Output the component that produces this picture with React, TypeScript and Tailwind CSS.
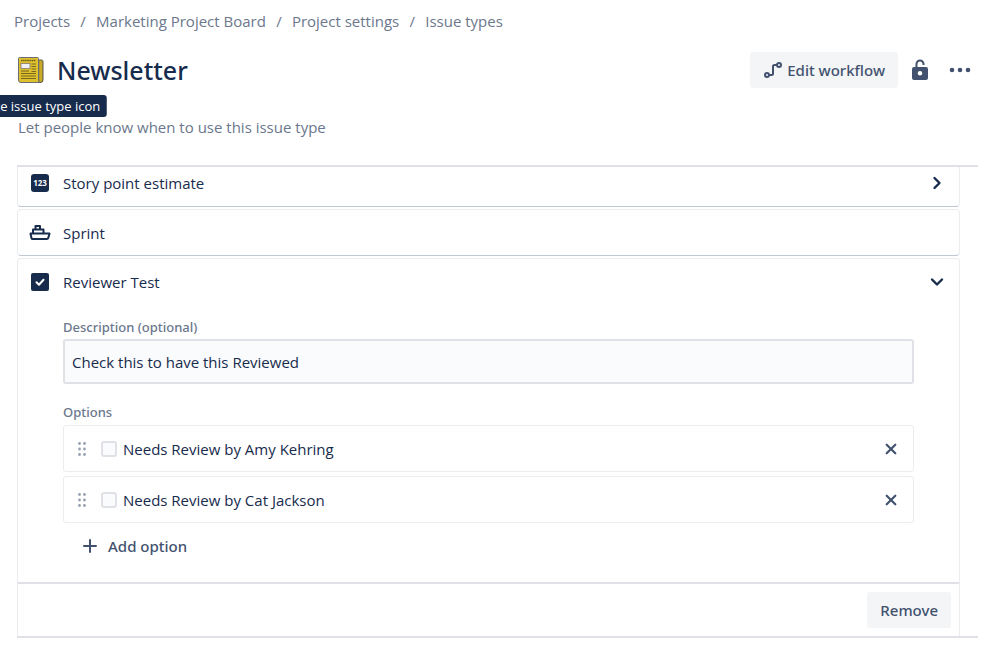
import { ReactNode, useState } from "react";

const crumbs = ["Projects", "Marketing Project Board", "Project settings", "Issue types"];

const NewspaperIcon = () => (
  <svg width="28" height="28" viewBox="0 0 28 28" aria-hidden="true">
    <path d="M20 4h4.500q1.500 0 1.500 1.500V24q0 2.500-2.500 2.500H20z" fill="#b59b25" stroke="#5c5a4a" strokeWidth="1" />
    <path d="M1.500 2.500q0-1 1-1h18q1 0 1 1v21.500q0 2.500 2 2.500H4q-2.500 0-2.500-2.500z" fill="#dfc02d" stroke="#6b6c78" strokeWidth="1" />
    <path d="M4 4.500h15" stroke="#6b5d20" strokeWidth="1.500" strokeDasharray="1.500 .6" />
    <rect x="4" y="7.500" width="9" height="5" fill="#f2f1fa" stroke="#81776a" strokeWidth=".8" />
    <path d="M14.500 8H19M14.500 10.500H19M14.500 13H19M4 15h8M14.500 15.500H19M4 17.500h15M4 20h15M4 22.500h15" stroke="#776720" strokeWidth="1.100" />
    <path d="M24 5v20" stroke="#ddbb2d" strokeWidth="1" />
  </svg>
);

const WorkflowIcon = () => (
  <svg width="20" height="20" viewBox="0 0 20 20" fill="none" stroke="currentColor" strokeWidth="2" aria-hidden="true">
    <circle cx="4" cy="15" r="2" />
    <circle cx="16" cy="5" r="2" />
    <path d="M6 15h2.500q1.500 0 1.500-1.500v-7Q10 5 11.500 5H14" />
  </svg>
);

const UnlockIcon = () => (
  <svg width="18" height="24" viewBox="0 0 18 24" aria-hidden="true">
    <path d="M5.500 10V6a3.500 3.500 0 0 1 7 0v1" fill="none" stroke="currentColor" strokeWidth="2" />
    <path fillRule="evenodd" fill="currentColor" d="M3 9h12a2 2 0 0 1 2 2v9a2 2 0 0 1-2 2H3a2 2 0 0 1-2-2V11a2 2 0 0 1 2-2zm6 4a2.300 2.300 0 1 0 0 4.600 2.300 2.300 0 0 0 0-4.600z" />
  </svg>
);

const MoreIcon = () => (
  <svg width="22" height="6" viewBox="0 0 22 6" fill="currentColor" aria-hidden="true">
    <circle cx="3" cy="3" r="2.300" />
    <circle cx="11" cy="3" r="2.300" />
    <circle cx="19" cy="3" r="2.300" />
  </svg>
);

const NumberIcon = () => (
  <span className="flex h-[18px] w-[18px] items-center justify-center rounded-[3px] bg-[#172b4d] text-[8px] leading-none font-bold text-white">
    123
  </span>
);

const ShipIcon = () => (
  <svg width="22" height="18" viewBox="0 0 22 18" fill="none" stroke="currentColor" strokeWidth="2" strokeLinejoin="round" aria-hidden="true">
    <path d="M1.500 9.500h19l-1.300 4.700Q18.900 15 18 15H3.500Q2.700 15 2.500 14.200z" />
    <path d="M4 9.500V5.500h10.500V9.500" />
    <path d="M6.500 5.500V2h4.500v3.500" />
  </svg>
);

const CheckIcon = () => (
  <svg width="18" height="18" viewBox="0 0 18 18" aria-hidden="true">
    <rect width="18" height="18" rx="2" fill="#172b4d" />
    <path d="M5.500 9.200 8 11.700l4.500-4.900" fill="none" stroke="#fff" strokeWidth="2" strokeLinecap="round" strokeLinejoin="round" />
  </svg>
);

const ChevronIcon = ({ open }: { open: boolean }) => (
  <svg width="14" height="14" viewBox="0 0 14 14" fill="none" stroke="currentColor" strokeWidth="2.400" strokeLinecap="round" strokeLinejoin="round" aria-hidden="true">
    <path d={open ? "M2 4.500 7 9.500l5-5" : "m4.500 2 5 5-5 5"} />
  </svg>
);

const DragIcon = () => (
  <svg width="8" height="14" viewBox="0 0 8 14" fill="#97a0af" aria-hidden="true">
    {[1.5, 7, 12.5].map((y) => (
      <g key={y}>
        <circle cx="1.500" cy={y} r="1.400" />
        <circle cx="6.500" cy={y} r="1.400" />
      </g>
    ))}
  </svg>
);

const CloseIcon = () => (
  <svg width="12" height="12" viewBox="0 0 12 12" fill="none" stroke="currentColor" strokeWidth="2.200" strokeLinecap="round" aria-hidden="true">
    <path d="m1.700 1.700 8.600 8.600M10.300 1.700l-8.600 8.600" />
  </svg>
);

const PlusIcon = () => (
  <svg width="14" height="14" viewBox="0 0 14 14" fill="none" stroke="currentColor" strokeWidth="2" strokeLinecap="round" aria-hidden="true">
    <path d="M7 1v12M1 7h12" />
  </svg>
);

interface FieldLabelProps {
  icon: ReactNode;
  name: string;
}

const FieldLabel: React.FC<FieldLabelProps> = ({ icon, name }) => (
  <span className="flex items-center gap-3">
    <span className="flex w-[22px] justify-center">{icon}</span>
    {name}
  </span>
);

const App = () => {
  const [description, setDescription] = useState("Check this to have this Reviewed");
  const [options, setOptions] = useState(["Needs Review by Amy Kehring", "Needs Review by Cat Jackson"]);
  const [isOpen, setIsOpen] = useState(true);

  return (
    <main className="min-h-screen bg-white font-['Open_Sans','Noto_Sans',sans-serif] text-[15px] leading-5 text-[#172b4d]">
      <nav aria-label="Breadcrumbs" className="px-3.5 pt-[11px]">
        <ol className="flex text-[#6b778c]">
          {crumbs.map((crumb, i) => (
            <li key={crumb} className="flex">
              {i > 0 && <span className="w-[26px] text-center">/</span>}
              <a href="#">{crumb}</a>
            </li>
          ))}
        </ol>
      </nav>

      <header className="mt-[21px] flex h-9 items-center justify-between pr-7 pl-[17px]">
        <div className="flex items-center gap-3">
          <button className="relative" aria-label="Change issue type icon">
            <NewspaperIcon />
            <span className="absolute top-full left-1/2 mt-[11px] -translate-x-1/2 rounded-[3px] bg-[#172b4d] px-1.5 py-px text-[13px] leading-5 whitespace-nowrap text-white">
              Change issue type icon
            </span>
          </button>
          <h1 className="font-['Noto_Sans',sans-serif] text-[25px] leading-8 font-medium">Newsletter</h1>
        </div>
        <div className="flex items-center gap-[13px] text-[#42526e]">
          <button className="flex h-9 items-center gap-1 rounded-[3px] bg-[#f4f5f7] px-[13px] font-['Noto_Sans',sans-serif] font-medium">
            <WorkflowIcon />
            Edit workflow
          </button>
          <button aria-label="Restrictions">
            <UnlockIcon />
          </button>
          <button aria-label="More actions" className="ml-[7px]">
            <MoreIcon />
          </button>
        </div>
      </header>

      <p className="mt-[29px] px-[18px] text-[#6b778c]">Let people know when to use this issue type</p>

      <section className="mt-7 mr-[21px] ml-[17px] border-y-2 border-[#dfe1e6]">
        <div className="mr-[18px] flex flex-col gap-[2px]">
          <button className="flex h-10 items-center justify-between rounded-b-[4px] border border-t-0 border-[#ebecf0] border-b-[#c1c7d0] pr-[15px] pb-2 pl-[11px]">
            <FieldLabel icon={<NumberIcon />} name="Story point estimate" />
            <ChevronIcon open={false} />
          </button>
          <div className="flex h-[47px] items-center rounded-[4px] border border-[#ebecf0] border-b-[#c1c7d0] px-[11px]">
            <FieldLabel icon={<ShipIcon />} name="Sprint" />
          </div>

          <article className="rounded-t-[4px] border border-b-0 border-[#ebecf0]">
            <button
              aria-expanded={isOpen}
              onClick={() => setIsOpen(!isOpen)}
              className="flex h-[46px] w-full items-center justify-between pr-[15px] pl-[11px]"
            >
              <FieldLabel icon={<CheckIcon />} name="Reviewer Test" />
              <ChevronIcon open={isOpen} />
            </button>

            {isOpen && (
              <>
                <div className="px-[45px] pb-[21px]">
                  <label htmlFor="description" className="mt-3.5 block font-['Noto_Sans',sans-serif] text-[13px] leading-4 font-medium text-[#6b778c]">
                    Description (optional)
                  </label>
                  <input
                    id="description"
                    value={description}
                    onChange={(event) => setDescription(event.target.value)}
                    className="mt-1 h-[45px] w-full rounded-[3px] border-2 border-[#dfe1e6] bg-[#fafbfc] px-[7px] outline-none"
                  />

                  <h2 className="mt-5 font-['Noto_Sans',sans-serif] text-[13px] leading-4 font-medium text-[#6b778c]">Options</h2>
                  <ul className="mt-[5px] flex flex-col gap-1">
                    {options.map((option) => (
                      <li key={option} className="flex h-[47px] items-center rounded-[3px] border border-[#ebecf0] pr-4 pl-[14px]">
                        <DragIcon />
                        <label className="ml-[15px] flex items-center gap-1.5">
                          <input
                            type="checkbox"
                            className="h-4 w-4 appearance-none rounded-[3px] border-2 border-[#dfe1e6] bg-[#fafbfc] checked:bg-[#0052cc]"
                          />
                          {option}
                        </label>
                        <button
                          aria-label={`Remove ${option}`}
                          onClick={() => setOptions(options.filter((o) => o !== option))}
                          className="ml-auto text-[#42526e]"
                        >
                          <CloseIcon />
                        </button>
                      </li>
                    ))}
                  </ul>
                  <button
                    onClick={() => setOptions([...options, `Option ${options.length + 1}`])}
                    className="mt-2 ml-5 flex h-[30px] items-center gap-[11px] font-['Noto_Sans',sans-serif] font-medium text-[#42526e]"
                  >
                    <PlusIcon />
                    Add option
                  </button>
                </div>
                <footer className="flex justify-end border-t-2 border-[#dfe1e6] px-2 py-2">
                  <button className="h-9 rounded-[3px] bg-[#f4f5f7] px-[13px] font-['Noto_Sans',sans-serif] font-medium text-[#42526e]">Remove</button>
                </footer>
              </>
            )}
          </article>
        </div>
      </section>
    </main>
  );
};

export default App;
